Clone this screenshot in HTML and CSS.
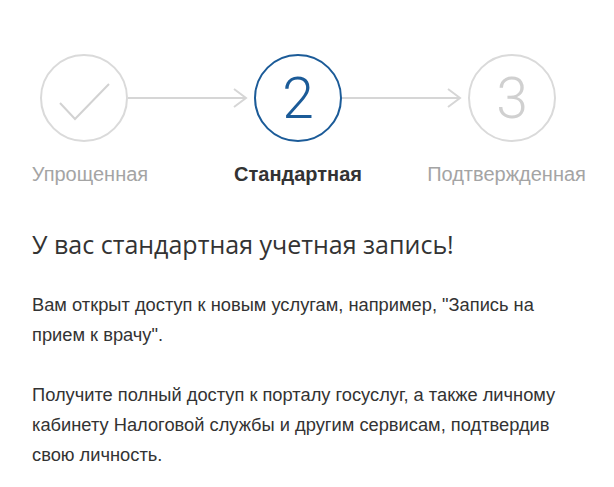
FILE: index.html
```html
<!DOCTYPE html>
<html lang="ru">
<head>
<meta charset="utf-8">
<title>Учетная запись</title>
<link rel="stylesheet" href="styles.css">
</head>
<body>
<div class="page">
  <div class="steps">
    <div class="step">
      <div class="circle done">
        <svg class="check" width="84" height="84" viewBox="0 0 84 84"><polyline points="18,47 33,63 67,28" fill="none" stroke="#d2d2d2" stroke-width="2"/></svg>
      </div>
      <div class="label first">Упрощенная</div>
    </div>
    <div class="connector">
      <svg width="126" height="24" viewBox="0 0 126 24"><line x1="0" y1="12" x2="118" y2="12" stroke="#d6d6d6" stroke-width="2"/><polyline points="106,3 118,12 106,21" fill="none" stroke="#d6d6d6" stroke-width="2"/></svg>
    </div>
    <div class="step">
      <div class="circle active"><span class="num">2</span></div>
      <div class="label current">Стандартная</div>
    </div>
    <div class="connector">
      <svg width="126" height="24" viewBox="0 0 126 24"><line x1="0" y1="12" x2="118" y2="12" stroke="#d6d6d6" stroke-width="2"/><polyline points="106,3 118,12 106,21" fill="none" stroke="#d6d6d6" stroke-width="2"/></svg>
    </div>
    <div class="step">
      <div class="circle"><span class="num">3</span></div>
      <div class="label last">Подтвержденная</div>
    </div>
  </div>

  <h1 class="title">У вас стандартная учетная запись!</h1>
  <p class="text">Вам открыт доступ к новым услугам, например, "Запись на прием к врачу".</p>
  <p class="text">Получите полный доступ к порталу госуслуг, а также личному кабинету Налоговой службы и другим сервисам, подтвердив свою личность.</p>
</div>
</body>
</html>
```

FILE: styles.css
```css
html, body {
  margin: 0;
  padding: 0;
  background: #ffffff;
}

.page {
  padding: 54px 0 0 32px;
  font-family: "Liberation Sans", Arial, sans-serif;
  color: #333333;
}

.steps {
  display: flex;
  align-items: flex-start;
  padding-left: 8px;
}

.step {
  width: 88px;
  display: flex;
  flex-direction: column;
  align-items: center;
}

.circle {
  width: 88px;
  height: 88px;
  box-sizing: border-box;
  border-radius: 50%;
  border: 2px solid #dadada;
  display: flex;
  align-items: center;
  justify-content: center;
}

.circle.active {
  border: 2.5px solid #1b5b98;
}

.check {
  display: block;
}

.num {
  font-family: "Roboto", "Liberation Sans", sans-serif;
  font-weight: 300;
  font-size: 57px;
  line-height: 1;
  color: #d0d0d0;
}

.active .num {
  color: #1b5b98;
}

.connector {
  width: 126px;
  height: 88px;
  display: flex;
  align-items: center;
}

.connector svg {
  display: block;
}

.label {
  margin-top: 20px;
  font-size: 20px;
  line-height: 24px;
  white-space: nowrap;
  color: #a4a4a4;
}

.label.first {
  margin-left: 12px;
}

.label.last {
  margin-right: 11px;
}

.label.current {
  font-weight: bold;
  color: #333333;
}

.title {
  margin: 42px 0 0 0;
  font-family: "Open Sans", "Liberation Sans", sans-serif;
  font-weight: normal;
  font-size: 25px;
  line-height: 32px;
  color: #333333;
}

.text {
  margin: 30px 0 0 0;
  width: 540px;
  font-size: 18.3px;
  line-height: 30px;
  color: #333333;
}
```
